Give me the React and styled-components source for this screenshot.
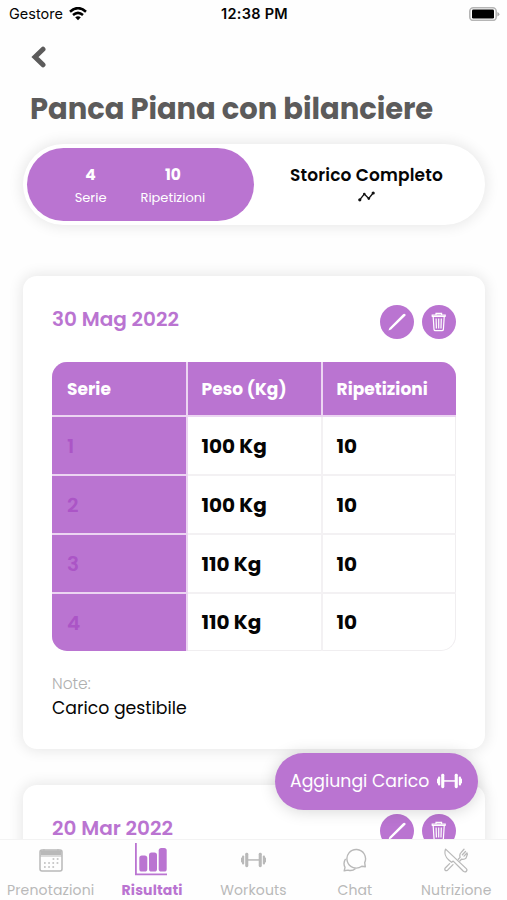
import React from 'react';
import styled, { createGlobalStyle } from 'styled-components';

const purple = '#ba74d1';
const grey = '#b9b9b9';

const GlobalStyle = createGlobalStyle`
  * { box-sizing: border-box; }
  body { margin: 0; background: #fefefe; font-family: Poppins, Inter, sans-serif; color: #050505; }
  h1, h2, p { margin: 0; }
  button { font: inherit; border: 0; padding: 0; background: none; }
  svg { display: block; flex: none; }
`;

const Screen = styled.div`
  position: relative;
  display: flex;
  flex-direction: column;
  width: 507px;
  height: 900px;
  overflow: hidden;
`;

const Label = styled.span`
  display: block;
  white-space: nowrap;
  font-size: ${(p) => p.$size}px;
  line-height: ${(p) => p.$line || 24}px;
  font-weight: ${(p) => p.$weight || 400};
  letter-spacing: ${(p) => p.$track || 0}px;
  color: ${(p) => p.$color || 'inherit'};
`;

const StatusBar = styled.div`
  display: grid;
  grid-template-columns: 1fr auto 1fr;
  align-items: center;
  height: 27px;
  padding: 0 7px 0 9px;
  font-family: Inter, sans-serif;
`;

const StatusGroup = styled.div`
  display: flex;
  align-items: center;
  gap: 6px;
  justify-content: ${(p) => (p.$end ? 'flex-end' : 'flex-start')};
`;

const Header = styled.header`
  display: flex;
  flex-direction: column;
  gap: 21px;
  padding: 18px 30px 0;
  color: #5c5b5b;
`;

const Scroll = styled.main`
  flex: 1;
  min-height: 0;
  overflow: hidden;
  padding: 15px 22px 0 23px;
`;

const Switcher = styled.div`
  display: grid;
  grid-template-columns: 227px 1fr;
  height: 81px;
  padding: 4px;
  margin-bottom: 51px;
  border-radius: 41px;
  background: #fff;
  box-shadow: 0 0 14px 2px rgba(0, 0, 0, 0.09);
`;

const ActiveTab = styled.div`
  display: flex;
  justify-content: center;
  gap: 34px;
  padding: 15px 1px 0 0;
  border-radius: 37px;
  background: ${purple};
  color: #fff;
`;

const Stat = styled.div`
  display: flex;
  flex-direction: column;
  align-items: center;
`;

const HistoryTab = styled.div`
  display: flex;
  flex-direction: column;
  align-items: center;
  gap: 4px;
  padding: 15px 2px 0 0;
`;

const Card = styled.section`
  height: 473px;
  margin-bottom: 36px;
  padding: 29px 29px 0;
  border-radius: 14px;
  background: #fff;
  box-shadow: 0 0 14px 2px rgba(0, 0, 0, 0.09);
`;

const CardHead = styled.div`
  display: flex;
  justify-content: space-between;
  height: 57px;
`;

const Actions = styled.div`
  display: flex;
  gap: 8px;
`;

const RoundButton = styled.button`
  display: grid;
  place-items: center;
  width: 34px;
  height: 34px;
  border-radius: 50%;
  background: ${purple};
  color: #fff;
`;

const Table = styled.div`
  display: grid;
  grid-template-columns: 134px 133.5px 133.5px;
  grid-template-rows: 53px repeat(4, 57px);
  gap: 2px 1.5px;
  width: 404px;
  height: 289px;
  overflow: hidden;
  border-radius: 15px;
  background: #f3f1f3;
`;

const Cell = styled.div`
  display: flex;
  align-items: center;
  padding-left: ${(p) => (p.$first ? 15 : 14)}px;
  color: ${(p) => (p.$head ? '#fff' : '#050505')};
  background: ${(p) => (p.$filled ? purple : '#fff')};
  border-bottom: ${(p) => (p.$bottom && !p.$filled ? '1px solid #f0eef0' : '0')};
  border-right: ${(p) => (p.$last && !p.$filled ? '1px solid #f0eef0' : '0')};
  border-bottom-right-radius: ${(p) => (p.$bottom && p.$last ? 15 : 0)}px;
  box-shadow: ${(p) => (p.$filled ? '0 0 0 2px #ecd5f2' : 'none')};
`;

const Notes = styled.div`
  padding-top: 21px;
`;

const AddButton = styled.button`
  position: absolute;
  right: 29px;
  bottom: 90px;
  display: flex;
  align-items: center;
  justify-content: space-between;
  width: 203px;
  height: 57px;
  padding: 0 16px 1px 15px;
  border-radius: 29px;
  background: ${purple};
  color: #fff;
  box-shadow: 0 1px 16px rgba(0, 0, 0, 0.17);
`;

const TabBar = styled.nav`
  position: relative;
  display: grid;
  grid-template-columns: repeat(5, 1fr);
  flex: none;
  height: 61px;
  border-top: 1px solid #f3f3f3;
  background: #fefefe;
`;

const TabItem = styled.div`
  display: flex;
  flex-direction: column;
  align-items: center;
  color: ${(p) => (p.$active ? purple : grey)};
`;

const TabIcon = styled.div`
  display: grid;
  place-items: center;
  height: 40px;
`;

const WifiIcon = () => (
  <svg width="18" height="14" viewBox="0 0 18 14" fill="none" stroke="#000" strokeWidth="2.5">
    <path d="M1 4.7Q9-2.5 17 4.7" />
    <path d="M4 8Q9 3.7 14 8" />
    <path d="M6.2 10.3Q9 8 11.8 10.3L9 13.3Z" fill="#000" stroke="none" />
  </svg>
);

const BatteryIcon = () => (
  <svg width="31" height="14" viewBox="0 0 31 14">
    <rect x="0.8" y="0.8" width="26.4" height="12.6" rx="3.5" fill="#fff" stroke="#b5b5b5" strokeWidth="1.6" />
    <rect x="3" y="2.6" width="22" height="9" rx="1.3" fill="#000" />
    <path d="M28.4 5v4.4q2-.8 2-2.2t-2-2.2" fill="#aaa" />
  </svg>
);

const BackIcon = () => (
  <svg width="16" height="24" viewBox="0 0 16 24" fill="none" stroke="currentColor" strokeWidth="5" strokeLinecap="round" strokeLinejoin="miter">
    <path d="M13 4.2 5 12 13 19.8" />
  </svg>
);

const TrendIcon = () => (
  <svg width="17" height="11" viewBox="0 0 17 11" fill="none" stroke="#111" strokeWidth="1.3">
    <path d="M1.7 8.8 6.3 3l4.4 4.5L15.2 2" />
    <g fill="#111" stroke="none">
      <circle cx="1.8" cy="8.8" r="1.6" />
      <circle cx="6.3" cy="3" r="1.3" />
      <circle cx="10.8" cy="7.6" r="1.3" />
      <circle cx="15.2" cy="2" r="1.6" />
    </g>
  </svg>
);

const PencilIcon = () => (
  <svg width="18" height="18" viewBox="0 0 18 18">
    <path d="M.5 17.5 1.4 14.9 14.8 1.4Q16.2.1 17.3 1.2T16.8 3.3L3.1 16.6Z" fill="currentColor" />
  </svg>
);

const TrashIcon = () => (
  <svg width="16" height="20" viewBox="0 0 16 20" fill="none" stroke="currentColor" strokeWidth="1.2">
    <path d="M.8 4.5h13.8M1.2 4.5V3.2h13v1.3M5 3V1.3h5.6V3M2.2 5l.8 12.4q.1 1.3 1.5 1.3h6.4q1.4 0 1.5-1.3L13.2 5M5.1 6.6l.3 9.9M7.7 6.6v9.9M10.3 6.6l-.3 9.9" />
  </svg>
);

const DumbbellIcon = () => (
  <svg width="25" height="16" viewBox="0 0 25 16" fill="currentColor">
    <rect x="0" y="5.6" width="1.6" height="4.8" rx="0.7" />
    <rect x="1" y="3.4" width="2.2" height="9.2" rx="1" />
    <rect x="4.2" y="0.8" width="3.1" height="14.4" rx="1.4" />
    <rect x="6" y="7.2" width="13" height="1.5" />
    <rect x="17.7" y="0.8" width="3.1" height="14.4" rx="1.4" />
    <rect x="21.8" y="3.4" width="2.2" height="9.2" rx="1" />
    <rect x="23.4" y="5.6" width="1.6" height="4.8" rx="0.7" />
  </svg>
);

const CalendarIcon = () => (
  <svg width="24" height="24" viewBox="0 0 24 24" fill="none" stroke="currentColor" strokeWidth="1.5">
    <rect x="1" y="2" width="22" height="21" rx="2" />
    <path d="M1.5 4.7h21" strokeWidth="4.6" />
    <path d="M1 8h22" strokeWidth="1" />
    <path d="M5 1v3M19 1v3" strokeWidth="1" />
    <path d="M13.6 11h7M5 15h15M5 19h11" strokeWidth="1.7" strokeDasharray="1.7 2.5" />
  </svg>
);

const ChartIcon = () => (
  <svg width="34" height="34" viewBox="0 0 34 34" fill="currentColor">
    <path d="M0 0h1.8v30.5H32v1.8H0Z" />
    <rect x="4.3" y="12.5" width="8" height="16" rx="2.6" />
    <rect x="14" y="9.5" width="8" height="19" rx="2.6" />
    <rect x="23.7" y="5" width="8" height="23.5" rx="2.6" />
  </svg>
);

const ChatIcon = () => (
  <svg width="24" height="24" viewBox="0 0 24 24" fill="none" stroke="currentColor" strokeWidth="1.4" strokeLinejoin="round">
    <path d="M22.3 18.8 18.8 18.2A9.3 9.3 0 1 1 21.7 14.6Z" />
    <path d="M2.6 10.8C.8 13.4.6 16.6 2 19.3L1.2 22.8 5 22.1q4 1.4 7.4-1.3" />
  </svg>
);

const CutleryIcon = () => (
  <svg width="24" height="25" viewBox="0 0 24 25" fill="none" stroke="currentColor" strokeWidth="1.3" strokeLinejoin="round" strokeLinecap="round">
    <path d="M1.6 1.1C.1 4.8 1.5 9.3 4.8 12.1L7.5 14.3 9.2 13.1 19.4 23.2Q21.2 24.5 22.4 23.2T22 20.4Z" />
    <path d="M9 16.6 3.8 21.9Q2.1 23.2 1.2 22.2T1.5 19.7L5.6 15.6M14.3 11.2 16.1 9.4Q15.2 6.3 17 4.6L20 1.2M15.8 13 17.5 11.2Q20.4 11.8 22 10.1L23.5 6M18.4 6.8 21.5 3.5M20 8.1 23 5" />
  </svg>
);

const sets = [
  ['1', '100 Kg', '10'],
  ['2', '100 Kg', '10'],
  ['3', '110 Kg', '10'],
  ['4', '110 Kg', '10'],
];

const tabs = [
  { name: 'Prenotazioni', Icon: CalendarIcon, track: 0.15 },
  { name: 'Risultati', Icon: ChartIcon, track: 0.15, active: true },
  { name: 'Workouts', Icon: DumbbellIcon, track: 0.15 },
  { name: 'Chat', Icon: ChatIcon, track: 0.1 },
  { name: 'Nutrizione', Icon: CutleryIcon, track: 0.15 },
];

function SessionCard({ date, rows, note }) {
  return (
    <Card>
      <CardHead>
        <Label as="h2" $size={20} $weight={600} $color={purple} $line={29}>{date}</Label>
        <Actions>
          <RoundButton aria-label="Modifica"><PencilIcon /></RoundButton>
          <RoundButton aria-label="Elimina"><TrashIcon /></RoundButton>
        </Actions>
      </CardHead>
      {rows && (
        <Table>
          {['Serie', 'Peso (Kg)', 'Ripetizioni'].map((t, i) => (
            <Cell key={t} $head $filled $first={i === 0} $last={i === 2}><Label $size={17} $weight={700} $track={0.05}>{t}</Label></Cell>
          ))}
          {rows.map((row, r) => row.map((value, c) => (
            <Cell key={`${r}-${c}`} $filled={c === 0} $first={c === 0} $last={c === 2} $bottom={r === 3}>
              <Label $size={20} $weight={c ? 700 : 600} $color={c ? '#050505' : '#ab55c6'}>{value}</Label>
            </Cell>
          )))}
        </Table>
      )}
      {note && (
        <Notes>
          <Label $size={15.5} $weight={300} $color="#b0b0b0">Note:</Label>
          <Label $size={17.3}>{note}</Label>
        </Notes>
      )}
    </Card>
  );
}

export default function App() {
  return (
    <Screen>
      <GlobalStyle />
      <StatusBar>
        <StatusGroup><Label $size={14.5}>Gestore</Label><WifiIcon /></StatusGroup>
        <Label $size={14.5} $weight={600} $track={0.3}>12:38 PM</Label>
        <StatusGroup $end><BatteryIcon /></StatusGroup>
      </StatusBar>
      <Header>
        <BackIcon />
        <Label as="h1" $size={29} $weight={700} $line={39} $track={-0.05}>Panca Piana con bilanciere</Label>
      </Header>
      <Scroll>
        <Switcher>
          <ActiveTab>
            <Stat><Label $size={15.5} $weight={700}>4</Label><Label $size={13} $line={22}>Serie</Label></Stat>
            <Stat><Label $size={15.5} $weight={700}>10</Label><Label $size={13} $line={22}>Ripetizioni</Label></Stat>
          </ActiveTab>
          <HistoryTab>
            <Label $size={17} $weight={600} $track={0.15}>Storico Completo</Label>
            <TrendIcon />
          </HistoryTab>
        </Switcher>
        <SessionCard date="30 Mag 2022" rows={sets} note="Carico gestibile" />
        <SessionCard date="20 Mar 2022" />
      </Scroll>
      <AddButton><Label $size={17.3}>Aggiungi Carico</Label><DumbbellIcon /></AddButton>
      <TabBar>
        {tabs.map(({ name, Icon, track, active }) => (
          <TabItem key={name} $active={active}>
            <TabIcon><Icon /></TabIcon>
            <Label $size={14} $weight={active ? 700 : 400} $track={track} $line={20}>{name}</Label>
          </TabItem>
        ))}
      </TabBar>
    </Screen>
  );
}
